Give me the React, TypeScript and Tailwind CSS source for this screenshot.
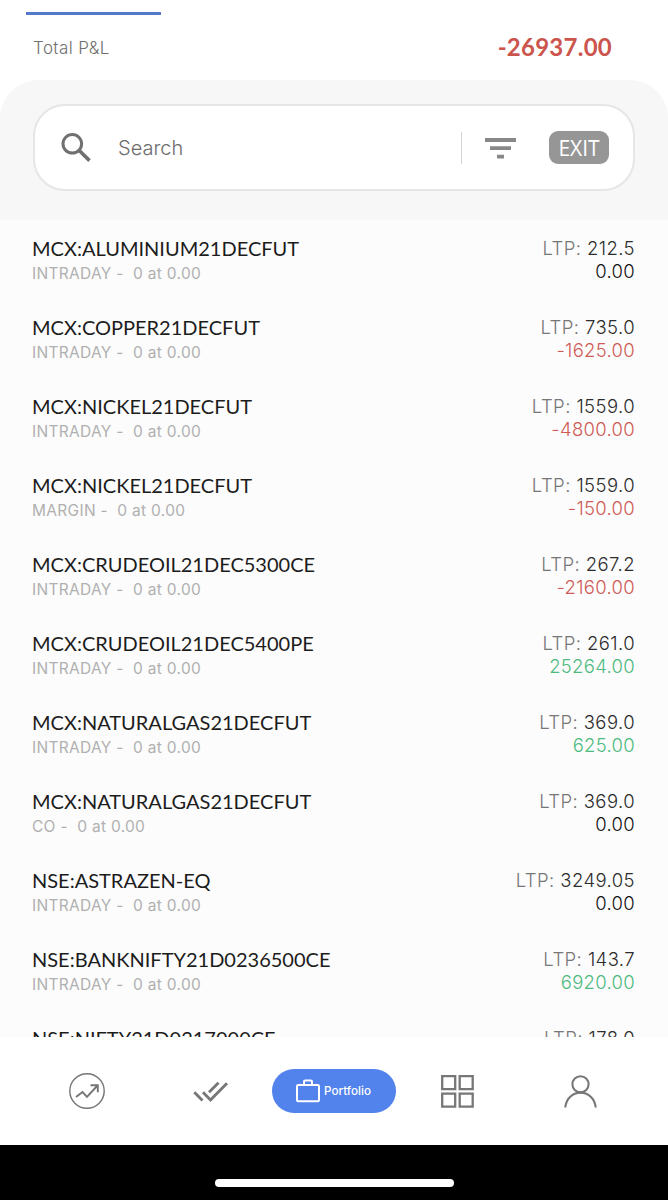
import clsx from "clsx";

type Position = {
  symbol: string;
  product: string;
  ltp: string;
  pnl: string;
};

const POSITIONS: Position[] = [
  { symbol: "MCX:ALUMINIUM21DECFUT", product: "INTRADAY", ltp: "212.5", pnl: "0.00" },
  { symbol: "MCX:COPPER21DECFUT", product: "INTRADAY", ltp: "735.0", pnl: "-1625.00" },
  { symbol: "MCX:NICKEL21DECFUT", product: "INTRADAY", ltp: "1559.0", pnl: "-4800.00" },
  { symbol: "MCX:NICKEL21DECFUT", product: "MARGIN", ltp: "1559.0", pnl: "-150.00" },
  { symbol: "MCX:CRUDEOIL21DEC5300CE", product: "INTRADAY", ltp: "267.2", pnl: "-2160.00" },
  { symbol: "MCX:CRUDEOIL21DEC5400PE", product: "INTRADAY", ltp: "261.0", pnl: "25264.00" },
  { symbol: "MCX:NATURALGAS21DECFUT", product: "INTRADAY", ltp: "369.0", pnl: "625.00" },
  { symbol: "MCX:NATURALGAS21DECFUT", product: "CO", ltp: "369.0", pnl: "0.00" },
  { symbol: "NSE:ASTRAZEN-EQ", product: "INTRADAY", ltp: "3249.05", pnl: "0.00" },
  { symbol: "NSE:BANKNIFTY21D0236500CE", product: "INTRADAY", ltp: "143.7", pnl: "6920.00" },
  { symbol: "NSE:NIFTY21D0217000CE", product: "INTRADAY", ltp: "178.0", pnl: "0.00" },
];

function PositionRow({ symbol, product, ltp, pnl }: Position) {
  const value = Number(pnl);

  return (
    <li className="flex h-[79px] shrink-0 justify-between whitespace-nowrap pl-8 pr-[33px]">
      <div className="pt-4">
        <div className="font-['Lato',sans-serif] text-[20px] leading-6 text-[#1c1c1c]">{symbol}</div>
        <div className="mt-0.5 text-[15.5px] leading-6 tracking-[0.3px] text-[#b0b0b0]">
          {product} -&nbsp; 0 at 0.00
        </div>
      </div>
      <div className="pt-[17px] text-right text-[18.5px] leading-[23px] tracking-[0.3px]">
        <div className="font-light tracking-[0.42px] text-[#777]">
          LTP: <span className="font-[350] text-[#2c2c2c]">{ltp}</span>
        </div>
        <div
          className={clsx(
            "font-[360]",
            value < 0 && "text-[#cf5b56]",
            value > 0 && "text-[#4dba7f]",
            value === 0 && "text-[#151515]"
          )}
        >
          {pnl}
        </div>
      </div>
    </li>
  );
}

function SearchBar() {
  return (
    <div className="mx-[33px] flex h-[87px] items-center rounded-[32px] border-2 border-[#e6e6e6] bg-white pl-[26px] pr-6">
      <svg width="31" height="30" viewBox="0 0 31 30" fill="none" stroke="#707070">
        <circle cx="11.3" cy="10.8" r="9.3" strokeWidth="3" />
        <path d="M17.5 17 19.5 19" strokeWidth="3" />
        <path d="M19 18.3 28.5 27.6" strokeWidth="3.6" />
      </svg>
      <span className="ml-[26px] text-[20px] font-[350] text-[#6c6c6c]">Search</span>
      <span className="ml-auto h-8 w-px bg-[#d5d5d5]" />
      <svg className="ml-[23px] mt-px" width="31" height="21" viewBox="0 0 31 21" fill="#888">
        <path d="M0 0h31v4H0zM5 8.3h21v3.8H5zM12 16.7h7v3.8h-7z" />
      </svg>
      <button className="ml-[33px] h-[33px] w-[60px] rounded-[9px] bg-[#969696] font-['Open_Sans',sans-serif] text-[21px] leading-[34px] text-white">
        EXIT
      </button>
    </div>
  );
}

function TabBar() {
  return (
    <nav className="flex h-[108px] shrink-0 items-center bg-white pl-[69px] pr-[71px]">
      <svg width="36" height="36" viewBox="0 0 36 36" fill="none" stroke="#757575">
        <circle cx="18" cy="18" r="17.2" strokeWidth="1.4" />
        <path d="M7 24 13.5 19 18 23.8 28.5 12.5M21.5 12.2h7.3v7" strokeWidth="1.9" />
      </svg>
      <svg className="ml-[86px] mt-px" width="38" height="22" viewBox="0 0 38 22" fill="none" stroke="#777" strokeWidth="2.9">
        <path d="M3.3 11.3 11.5 19.5M12 11.3 19.5 19 36 2.2M18 11.3 27.5 1.8" />
      </svg>
      <button className="ml-[43px] flex h-11 w-[124px] items-center rounded-full bg-[#5282ec] pl-6 text-white">
        <svg width="24" height="24" viewBox="0 0 24 24" fill="none" stroke="#fff" strokeWidth="2">
          <rect x="1" y="6" width="22" height="16.3" rx="1.2" />
          <path d="M8 6V2.6Q8 1.5 9.2 1.5h5.6Q16 1.5 16 2.6V6" />
        </svg>
        <span className="ml-1 mt-px text-[11.7px] font-medium">Portfolio</span>
      </button>
      <svg className="ml-[45px]" width="33" height="33" viewBox="0 0 33 33" fill="none" stroke="#777" strokeWidth="2.3">
        <path d="M1.2 1.2h13v13h-13zM18.7 1.2h13v13h-13zM1.2 18.7h13v13h-13zM18.7 18.7h13v13h-13z" />
      </svg>
      <svg className="ml-auto" width="33" height="33" viewBox="0 0 33 33" fill="none" stroke="#777" strokeWidth="2.1">
        <circle cx="16.5" cy="9.3" r="8.1" />
        <path d="M1.3 32.5C2 24.5 8 17.6 16.5 17.6S31 24.5 31.7 32.5" />
      </svg>
    </nav>
  );
}

export default function App() {
  return (
    <div className="flex h-[1200px] w-[668px] flex-col overflow-hidden bg-white font-['Inter',sans-serif]">
      <header className="h-20 shrink-0 pt-3">
        <div className="ml-[26px] h-[3px] w-[135px] bg-[#5579c9]" />
        <div className="flex items-center justify-between pl-[33px] pr-14 pt-[17px]">
          <span className="mt-[3px] text-[17px] font-[330] tracking-[0.4px] text-[#707070]">Total P&amp;L</span>
          <span className="font-['Lato',sans-serif] text-[24px] font-bold leading-[30px] tracking-[0.25px] text-[#cb544d]">
            -26937.00
          </span>
        </div>
      </header>

      <section className="h-[140px] shrink-0 rounded-t-[38px] bg-[#f7f7f7] pt-6">
        <SearchBar />
      </section>

      <ul className="flex min-h-0 flex-1 flex-col overflow-hidden bg-[#fcfcfc]">
        {POSITIONS.map((position, i) => (
          <PositionRow key={i} {...position} />
        ))}
      </ul>

      <TabBar />

      {/* home indicator */}
      <div className="flex h-[55px] shrink-0 justify-center bg-black pt-[34px]">
        <div className="h-2 w-[239px] rounded-full bg-white" />
      </div>
    </div>
  );
}
